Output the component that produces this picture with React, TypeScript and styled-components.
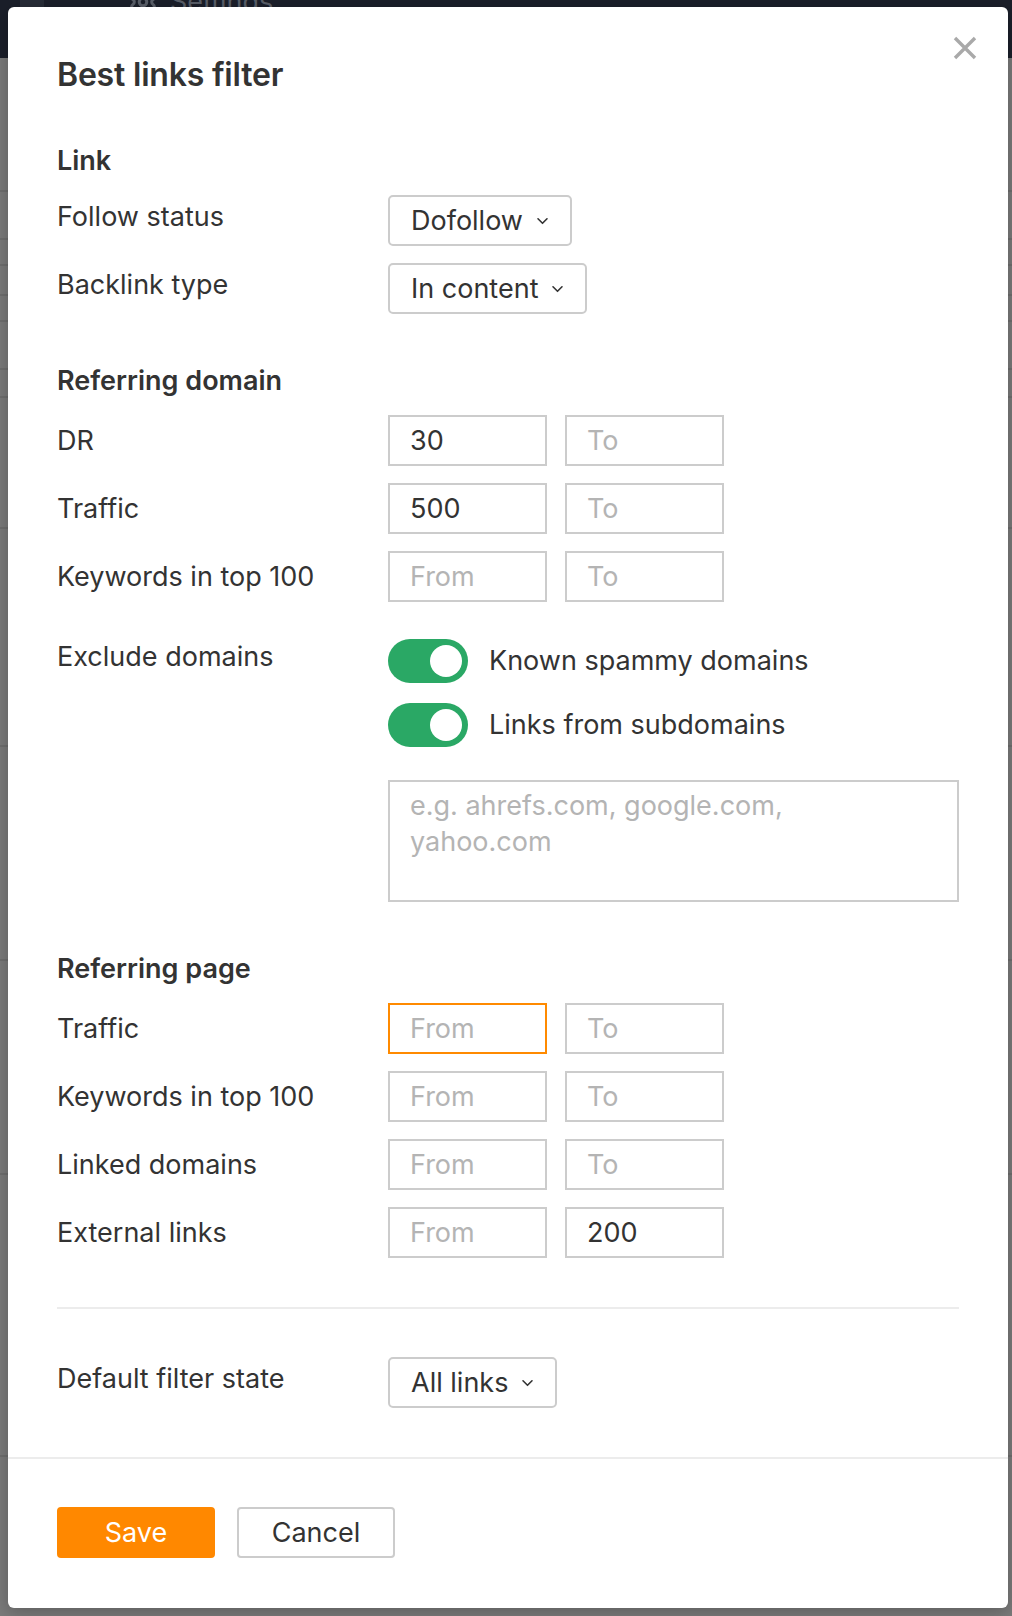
import React from "react"
import styled, { createGlobalStyle } from "styled-components"
import { Settings } from "lucide-react"

const GlobalStyle = createGlobalStyle`
  html, body {
    margin: 0;
    padding: 0;
  }
  body {
    background: #7b7b7b;
    font-family: Inter, "Noto Sans", "Liberation Sans", sans-serif;
    color: #333;
  }
  * {
    box-sizing: border-box;
  }
`

// rows of the page that sits behind the dimmed overlay
const backRows = [134, 48, 26, 30, 26, 48, 28, 131, 218, 214, 214, 282]

const Page = styled.div`
  position: relative;
  width: 1012px;
  min-height: 1616px;
  overflow: hidden;
`
const TopBar = styled.div`
  height: 58px;
  background: #1b1f2a;
  display: flex;
  align-items: flex-start;
  gap: 84px;
  padding-left: 20px;
`
const AppTile = styled.div`
  width: 24px;
  height: 35px;
  background: #272c37;
  border-radius: 0 0 5px 5px;
`
const TabLabel = styled.div`
  display: flex;
  align-items: center;
  gap: 12px;
  margin-top: -16px;
  font-size: 27px;
  line-height: 36px;
  color: #5a5f69;
`
const BackRow = styled.div<{ $h: number }>`
  height: ${(p) => p.$h}px;
  border-bottom: 2px solid #6f6f6f;
`

const Modal = styled.div`
  position: absolute;
  top: 7px;
  left: 8px;
  width: 1000px;
  background: #fff;
  border-radius: 6px;
  box-shadow: 0 4px 18px rgba(0, 0, 0, 0.25);
`
const Body = styled.div`
  padding: 50px 49px 49px;
`
const CloseButton = styled.button`
  position: absolute;
  top: 28px;
  right: 30px;
  width: 26px;
  height: 26px;
  padding: 0;
  border: 0;
  background: none;
  cursor: pointer;
  display: flex;
  align-items: center;
  justify-content: center;
`
const Title = styled.h2`
  margin: 0 0 50px;
  font-size: 32px;
  line-height: 36px;
  font-weight: 600;
  color: #333;
  letter-spacing: -0.2px;
`
const Section = styled.section`
  display: flex;
  flex-direction: column;
  gap: 17px;
  margin-bottom: 49px;
`
const SectionTitle = styled.h3`
  margin: 0 0 -1px;
  font-size: 27px;
  line-height: 36px;
  font-weight: 600;
  color: #333;
`
const Row = styled.div<{ $spaced?: boolean }>`
  display: grid;
  grid-template-columns: 331px 1fr;
  align-items: start;
  margin-top: ${(p) => (p.$spaced ? "20px" : "0")};
`
const Label = styled.div<{ $pad: number }>`
  padding-top: ${(p) => p.$pad}px;
  font-size: 27px;
  line-height: 36px;
  color: #333;
`
const Range = styled.div`
  display: flex;
  gap: 18px;
`
const NumInput = styled.input<{ $focus?: boolean }>`
  width: 159px;
  height: 51px;
  padding: 0 20px;
  border: 2px solid ${(p) => (p.$focus ? "#ff8a00" : "#cccccc")};
  border-radius: 0;
  outline: none;
  font-family: inherit;
  font-size: 27px;
  color: #333;
  background: #fff;
  &::placeholder {
    color: #b4b4b4;
  }
`
const Select = styled.button`
  display: inline-flex;
  align-items: center;
  gap: 13px;
  height: 51px;
  padding: 0 21px;
  border: 2px solid #cccccc;
  border-radius: 5px;
  background: #fff;
  font-family: inherit;
  font-size: 27px;
  color: #333;
  cursor: pointer;
`
const Toggles = styled.div`
  display: flex;
  flex-direction: column;
  gap: 20px;
`
const ToggleRow = styled.label`
  display: flex;
  align-items: center;
  gap: 21px;
  font-size: 27px;
  line-height: 36px;
  color: #333;
`
const Switch = styled.span<{ $on: boolean }>`
  display: flex;
  align-items: center;
  justify-content: ${(p) => (p.$on ? "flex-end" : "flex-start")};
  width: 80px;
  height: 44px;
  padding: 0 6px;
  border-radius: 22px;
  background: ${(p) => (p.$on ? "#2aa865" : "#ccc")};
`
const Knob = styled.span`
  width: 32px;
  height: 32px;
  border-radius: 50%;
  background: #fff;
`
const DomainsBox = styled.textarea`
  display: block;
  width: 571px;
  height: 122px;
  margin-top: 33px;
  padding: 6px 20px;
  border: 2px solid #cccccc;
  border-radius: 0;
  outline: none;
  resize: none;
  font-family: inherit;
  font-size: 27px;
  line-height: 36px;
  color: #333;
  &::placeholder {
    color: #b4b4b4;
  }
`
const Divider = styled.hr`
  margin: 0 0 48px;
  border: 0;
  border-top: 2px solid #ececec;
`
const Footer = styled.div`
  display: flex;
  gap: 22px;
  padding: 48px 49px 50px;
  border-top: 2px solid #ececec;
`
const Button = styled.button<{ $primary?: boolean }>`
  width: 158px;
  height: 51px;
  border-radius: 4px;
  border: 2px solid ${(p) => (p.$primary ? "#ff8800" : "#cccccc")};
  background: ${(p) => (p.$primary ? "#ff8800" : "#fff")};
  color: ${(p) => (p.$primary ? "#fff" : "#333")};
  font-family: inherit;
  font-size: 27px;
  cursor: pointer;
`

const Chevron = () => (
  <svg width="13" height="8" viewBox="0 0 13 8" fill="none">
    <path d="M2 1.8l4.5 4.5 4.5-4.5" stroke="#333" strokeWidth="1.6" strokeLinecap="round" strokeLinejoin="round" />
  </svg>
)

const CloseIcon = () => (
  <svg width="24" height="24" viewBox="0 0 24 24" fill="none">
    <path d="M2 2l20 20M22 2L2 22" stroke="#a9a9a9" strokeWidth="3.4" />
  </svg>
)

const RangeRow: React.FC<{ label: string; from?: string; to?: string; focus?: boolean }> = ({
  label,
  from,
  to,
  focus,
}) => (
  <Row>
    <Label $pad={8}>{label}</Label>
    <Range>
      <NumInput placeholder="From" defaultValue={from} $focus={focus} />
      <NumInput placeholder="To" defaultValue={to} />
    </Range>
  </Row>
)

const SelectRow: React.FC<{ label: string; value: string }> = ({ label, value }) => (
  <Row>
    <Label $pad={4}>{label}</Label>
    <div>
      <Select type="button">
        {value}
        <Chevron />
      </Select>
    </div>
  </Row>
)

export default function App() {
  return (
    <Page>
      <GlobalStyle />
      <TopBar>
        <AppTile />
        <TabLabel>
          <Settings size={30} strokeWidth={2.4} />
          Settings
        </TabLabel>
      </TopBar>
      {backRows.map((h, i) => (
        <BackRow key={i} $h={h} />
      ))}

      <Modal>
        <CloseButton aria-label="Close">
          <CloseIcon />
        </CloseButton>
        <Body>
          <Title>Best links filter</Title>

          <Section>
            <SectionTitle>Link</SectionTitle>
            <SelectRow label="Follow status" value="Dofollow" />
            <SelectRow label="Backlink type" value="In content" />
          </Section>

          <Section>
            <SectionTitle>Referring domain</SectionTitle>
            <RangeRow label="DR" from="30" />
            <RangeRow label="Traffic" from="500" />
            <RangeRow label="Keywords in top 100" />
            <Row $spaced>
              <Label $pad={0}>Exclude domains</Label>
              <div>
                <Toggles>
                  <ToggleRow>
                    <Switch $on>
                      <Knob />
                    </Switch>
                    Known spammy domains
                  </ToggleRow>
                  <ToggleRow>
                    <Switch $on>
                      <Knob />
                    </Switch>
                    Links from subdomains
                  </ToggleRow>
                </Toggles>
                <DomainsBox placeholder={"e.g. ahrefs.com, google.com,\nyahoo.com"} />
              </div>
            </Row>
          </Section>

          <Section>
            <SectionTitle>Referring page</SectionTitle>
            <RangeRow label="Traffic" focus />
            <RangeRow label="Keywords in top 100" />
            <RangeRow label="Linked domains" />
            <RangeRow label="External links" to="200" />
          </Section>

          <Divider />

          <SelectRow label="Default filter state" value="All links" />
        </Body>
        <Footer>
          <Button $primary>Save</Button>
          <Button>Cancel</Button>
        </Footer>
      </Modal>
    </Page>
  )
}
